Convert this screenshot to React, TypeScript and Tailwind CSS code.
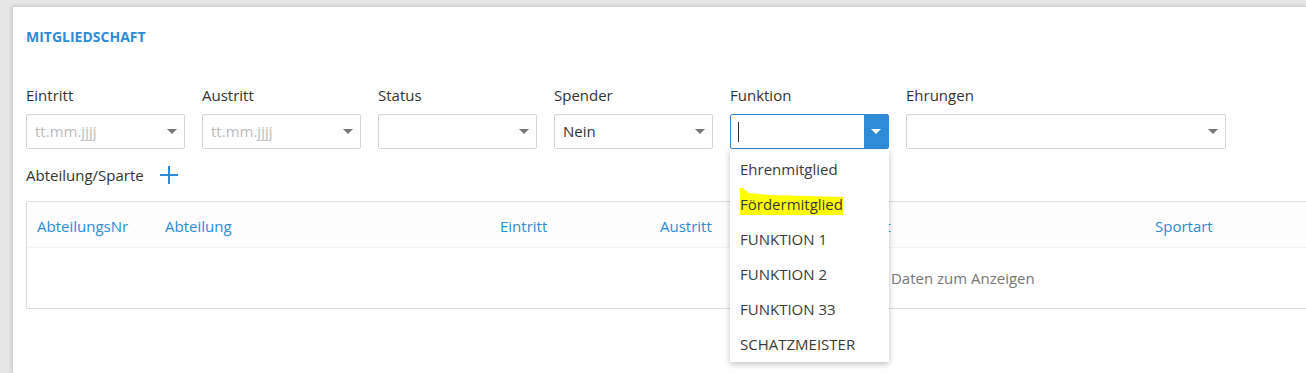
const FONT = { fontFamily: '"Open Sans", "Noto Sans", sans-serif' };

// Small solid caret used by the dropdown widgets
function Caret({ className }: { className?: string }) {
    return (
        <svg width="10" height="5" viewBox="0 0 10 5" className={className}>
            <polygon points="0,0 10,0 5,5" fill="currentColor" />
        </svg>
    );
}

interface FieldProps {
    label: string;
    value?: string;
    placeholder?: string;
    width?: string;
}

function Field({ label, value, placeholder, width = 'w-[159px]' }: FieldProps) {
    return (
        <div className={width}>
            <div className="h-[20px] text-[15px] leading-[20px] text-[#333]">{label}</div>
            <div className="mt-[9px] flex h-[35px] items-center rounded-[2px] border border-[#d6d6d6] bg-white">
                <div className="flex-1 pl-[8px] text-[15px]">
                    {value ? (
                        <span className="text-[#333]">{value}</span>
                    ) : (
                        <span className="text-[#bdbdbd]">{placeholder}</span>
                    )}
                </div>
                <div className="flex h-full w-[24px] items-center justify-center text-[#777]">
                    <Caret />
                </div>
            </div>
        </div>
    );
}

const options = ['Ehrenmitglied', 'Fördermitglied', 'FUNKTION 1', 'FUNKTION 2', 'FUNKTION 33', 'SCHATZMEISTER'];

function FunktionField() {
    return (
        <div className="relative w-[159px]">
            <div className="h-[20px] text-[15px] leading-[20px] text-[#333]">Funktion</div>
            <div className="mt-[9px] flex h-[35px] items-center rounded-[2px] border border-[#2f8bd6] bg-white">
                <div className="flex-1 pl-[7px]">
                    <div className="h-[20px] w-px bg-[#333]" />
                </div>
                <div className="flex h-full w-[24px] items-center justify-center bg-[#2f8bd6] text-white">
                    <Caret />
                </div>
            </div>
            {/* open dropdown list */}
            <div className="absolute left-0 top-[65px] z-10 w-[159px] bg-white pt-[2px] shadow-[0_2px_6px_rgba(0,0,0,0.25)]">
                {options.map((o, i) => (
                    <div key={o} className="relative h-[35px] pl-[10px] text-[15px] leading-[35px] text-[#3a3a3a]">
                        {i === 1 && (
                            <svg
                                width="104"
                                height="29"
                                viewBox="0 0 104 29"
                                className="absolute left-[10px] top-[0px]"
                            >
                                <polygon points="0,1 3,1 9,6 30,8 103,10 103,28 0,28" fill="#ffff00" />
                            </svg>
                        )}
                        <span className="relative">{o}</span>
                    </div>
                ))}
            </div>
        </div>
    );
}

export default function App() {
    return (
        <div style={FONT} className="h-[373px] overflow-hidden bg-[#e6e6e6] pl-[12px] pt-[6px]">
            <div className="h-full overflow-hidden border-l border-t border-[#d2d2d2] bg-white pl-[13px] shadow-[0_0_4px_rgba(0,0,0,0.15)]">
                <div className="pt-[20px] text-[14px] font-bold leading-[20px] text-[#2f8bd6]">MITGLIEDSCHAFT</div>

                <div className="mt-[38px] flex gap-[17px]">
                    <Field label="Eintritt" placeholder="tt.mm.jjjj" />
                    <Field label="Austritt" placeholder="tt.mm.jjjj" />
                    <Field label="Status" />
                    <Field label="Spender" value="Nein" />
                    <FunktionField />
                    <Field label="Ehrungen" width="w-[320px]" />
                </div>

                <div className="mt-[16px] flex items-center gap-[16px]">
                    <span className="text-[15px] leading-[20px] text-[#333]">Abteilung/Sparte</span>
                    <svg width="18" height="18" viewBox="0 0 18 18" className="text-[#2f8bd6]">
                        <path d="M9 0v18M0 9h18" stroke="currentColor" strokeWidth="2" />
                    </svg>
                </div>

                <div className="mt-[16px] w-[1320px] rounded-tl-[3px] border-l border-t border-[#dcdcdc]">
                    <div className="flex h-[46px] items-center border-b border-[#f2f2f2] bg-[#fdfdfd] pt-[4px] text-[15px] text-[#2f8bd6]">
                        <div className="w-[138px] pl-[10px]">AbteilungsNr</div>
                        <div className="w-[335px]">Abteilung</div>
                        <div className="w-[160px]">Eintritt</div>
                        <div className="w-[154px]">Austritt</div>
                        <div className="w-[341px]">Beitragsart</div>
                        <div>Sportart</div>
                    </div>
                    <div className="flex h-[61px] items-center border-b border-[#dcdcdc] pl-[821px] text-[15px] text-[#777]">
                        Keine Daten zum Anzeigen
                    </div>
                </div>
            </div>
        </div>
    );
}
